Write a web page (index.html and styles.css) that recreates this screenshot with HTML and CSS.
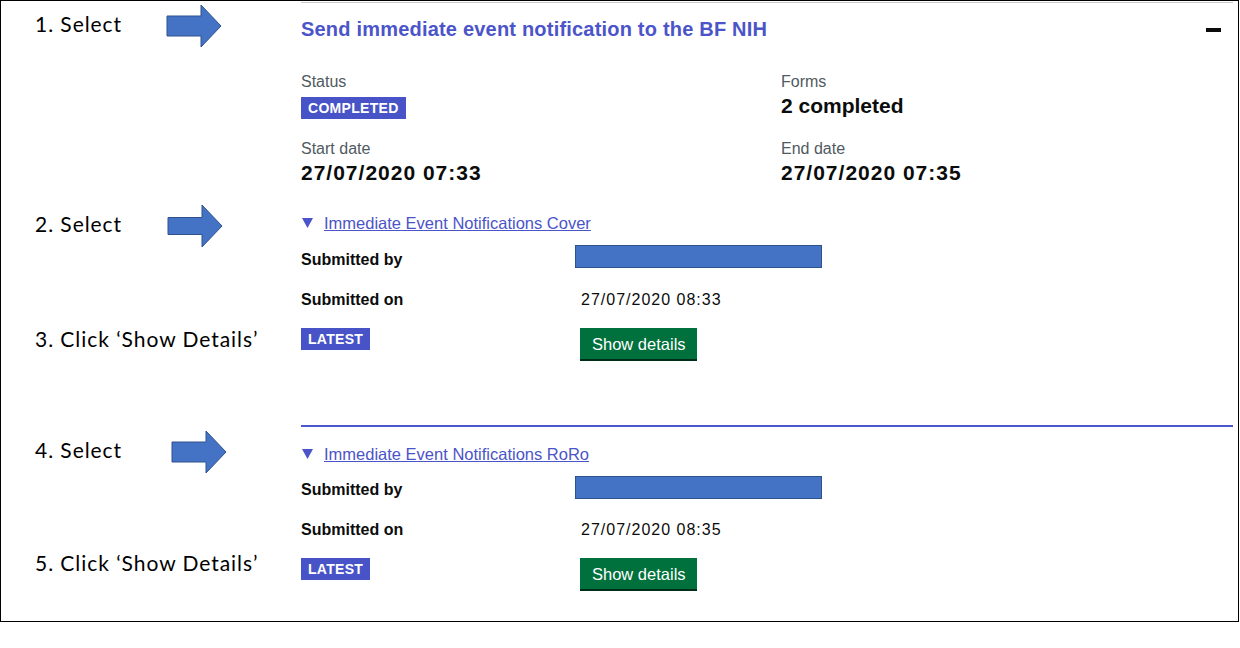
FILE: index.html
```html
<!DOCTYPE html>
<html lang="en">
<head>
<meta charset="utf-8">
<title>Send immediate event notification to the BF NIH</title>
<link rel="stylesheet" href="styles.css">
</head>
<body>
<div class="frame">
  <aside class="annotations">
    <div class="callout callout-1">
      <span class="callout-text">1. Select</span>
      <svg class="arrow" width="56" height="44" viewBox="0 0 56 44" aria-hidden="true"><path d="M1 12H35V1L55 22L35 43V32H1Z" fill="#4472c4" stroke="#2f528f"/></svg>
    </div>
    <div class="callout callout-2">
      <span class="callout-text">2. Select</span>
      <svg class="arrow arrow-2" width="56" height="44" viewBox="0 0 56 44" aria-hidden="true"><path d="M1 13.5H35V1L55 22L35 43V30.5H1Z" fill="#4472c4" stroke="#2f528f"/></svg>
    </div>
    <div class="callout callout-3">
      <span class="callout-text">3. Click ‘Show Details’</span>
    </div>
    <div class="callout callout-4">
      <span class="callout-text">4. Select</span>
      <svg class="arrow arrow-4" width="56" height="44" viewBox="0 0 56 44" aria-hidden="true"><path d="M1 12H35V1L55 22L35 43V32H1Z" fill="#4472c4" stroke="#2f528f"/></svg>
    </div>
    <div class="callout callout-5">
      <span class="callout-text">5. Click ‘Show Details’</span>
    </div>
  </aside>

  <main class="task">
    <div class="task-header">
      <h2 class="task-title">Send immediate event notification to the BF NIH</h2>
      <span class="collapse-icon" aria-label="Collapse"></span>
    </div>

    <dl class="summary">
      <div class="summary-item">
        <dt class="summary-label">Status</dt>
        <dd class="summary-value"><strong class="tag tag-status">Completed</strong></dd>
      </div>
      <div class="summary-item">
        <dt class="summary-label">Forms</dt>
        <dd class="summary-value">2 completed</dd>
      </div>
      <div class="summary-item">
        <dt class="summary-label">Start date</dt>
        <dd class="summary-value summary-date">27/07/2020 07:33</dd>
      </div>
      <div class="summary-item">
        <dt class="summary-label">End date</dt>
        <dd class="summary-value summary-date">27/07/2020 07:35</dd>
      </div>
    </dl>

    <section class="form-block">
      <div class="form-toggle">
        <svg class="toggle-icon" width="11" height="10" viewBox="0 0 11 10" aria-hidden="true"><path d="M0 0H11L5.5 10Z"/></svg>
        <a class="toggle-link" href="#">Immediate Event Notifications Cover</a>
      </div>
      <div class="sub-row">
        <span class="sub-label">Submitted by</span>
        <span class="redacted"></span>
      </div>
      <div class="sub-row">
        <span class="sub-label">Submitted on</span>
        <span class="sub-value">27/07/2020 08:33</span>
      </div>
      <div class="sub-actions">
        <strong class="tag">Latest</strong>
        <button class="button" type="button">Show details</button>
      </div>
    </section>

    <hr class="section-break">

    <section class="form-block">
      <div class="form-toggle">
        <svg class="toggle-icon" width="11" height="10" viewBox="0 0 11 10" aria-hidden="true"><path d="M0 0H11L5.5 10Z"/></svg>
        <a class="toggle-link" href="#">Immediate Event Notifications RoRo</a>
      </div>
      <div class="sub-row">
        <span class="sub-label">Submitted by</span>
        <span class="redacted"></span>
      </div>
      <div class="sub-row">
        <span class="sub-label">Submitted on</span>
        <span class="sub-value">27/07/2020 08:35</span>
      </div>
      <div class="sub-actions">
        <strong class="tag">Latest</strong>
        <button class="button" type="button">Show details</button>
      </div>
    </section>
  </main>
</div>
</body>
</html>
```

FILE: styles.css
```css
* {
  box-sizing: border-box;
}

html, body {
  margin: 0;
  padding: 0;
  background: #ffffff;
}

body {
  font-family: "Liberation Sans", Arial, sans-serif;
  color: #0b0c0c;
}

.frame {
  display: flex;
  width: 1239px;
  height: 622px;
  border: 1px solid #000000;
  padding-right: 5px;
}

/* ---------- annotation callouts ---------- */

.annotations {
  flex: none;
  width: 300px;
  display: flex;
  flex-direction: column;
}

.callout {
  display: flex;
  align-items: center;
  height: 44px;
  padding-left: 34px;
}

.callout-1 { margin-top: 3px; }
.callout-2 { margin-top: 156px; }
.callout-3 { margin-top: 71px; }
.callout-4 { margin-top: 67px; }
.callout-5 { margin-top: 69px; }

.callout-text {
  flex: none;
  width: 131px;
  margin-bottom: 5px;
  font-family: Lato, "Open Sans", sans-serif;
  font-size: 21px;
  line-height: 25px;
  letter-spacing: 0.95px;
  color: #000000;
  white-space: nowrap;
}

.arrow {
  flex: none;
  display: block;
}

.arrow-2 { margin-left: 1px; }
.arrow-4 { margin-left: 5px; }

/* ---------- task content ---------- */

.task {
  flex: 1;
  min-width: 0;
}

.task-header {
  display: flex;
  align-items: center;
  justify-content: space-between;
  margin-top: 1px;
  border-top: 1px solid #c8cacb;
  padding: 14px 12px 0 0;
}

.task-title {
  margin: 0;
  font-size: 20px;
  line-height: 25px;
  font-weight: 700;
  letter-spacing: 0.2px;
  color: #4b54c8;
}

.collapse-icon {
  display: block;
  width: 15px;
  height: 4px;
  background: #0b0c0c;
}

.summary {
  display: grid;
  grid-template-columns: 480px 1fr;
  row-gap: 21px;
  margin: 30px 0 27px;
}

.summary-label {
  margin: 0;
  font-size: 16px;
  line-height: 20px;
  color: #505a5f;
}

.summary-value {
  margin: 1px 0 0;
  height: 25px;
  font-size: 21px;
  line-height: 25px;
  font-weight: 700;
}

.summary-date {
  letter-spacing: 1px;
}

.tag {
  display: inline-block;
  height: 22px;
  padding: 0 7px;
  font-size: 14px;
  line-height: 22px;
  font-weight: 700;
  letter-spacing: 0.3px;
  text-transform: uppercase;
  color: #ffffff;
  background: #4753c6;
}

.tag-status {
  vertical-align: top;
  margin-top: 4px;
}

/* ---------- form blocks ---------- */

.form-toggle {
  display: flex;
  align-items: center;
  gap: 11px;
  height: 22px;
  margin-bottom: 13.5px;
  padding-left: 1px;
}

.toggle-icon {
  display: block;
  flex: none;
  fill: #4b54c8;
}

.toggle-link {
  font-size: 16.5px;
  line-height: 22px;
  color: #4b54c8;
  text-decoration: underline;
  text-decoration-thickness: 1px;
}

.sub-row {
  display: grid;
  grid-template-columns: 279px 1fr;
  align-items: start;
  margin-bottom: 16px;
  line-height: 24px;
  font-size: 16px;
}

.sub-label {
  font-weight: 700;
}

.sub-value {
  padding-left: 1px;
  letter-spacing: 1px;
}

.redacted {
  display: block;
  width: 247px;
  height: 23px;
  margin: -2.5px 0 0 -5px;
  background: #4472c4;
  border: 1px solid #2f528f;
}

.sub-actions {
  display: grid;
  grid-template-columns: 279px auto;
  justify-content: start;
  align-items: start;
}

.sub-actions .tag {
  justify-self: start;
}

.button {
  height: 31px;
  margin: 0;
  padding: 2px 11px 0 12px;
  border: 0;
  border-radius: 0;
  font-family: "Liberation Sans", Arial, sans-serif;
  font-size: 16.5px;
  line-height: 29px;
  color: #ffffff;
  background: #00703c;
  box-shadow: 0 2px 0 #002d18;
  cursor: pointer;
}

.section-break {
  height: 0;
  margin: 66.5px 0 15.5px;
  border: 0;
  border-top: 2px solid #4a57cf;
}
```
